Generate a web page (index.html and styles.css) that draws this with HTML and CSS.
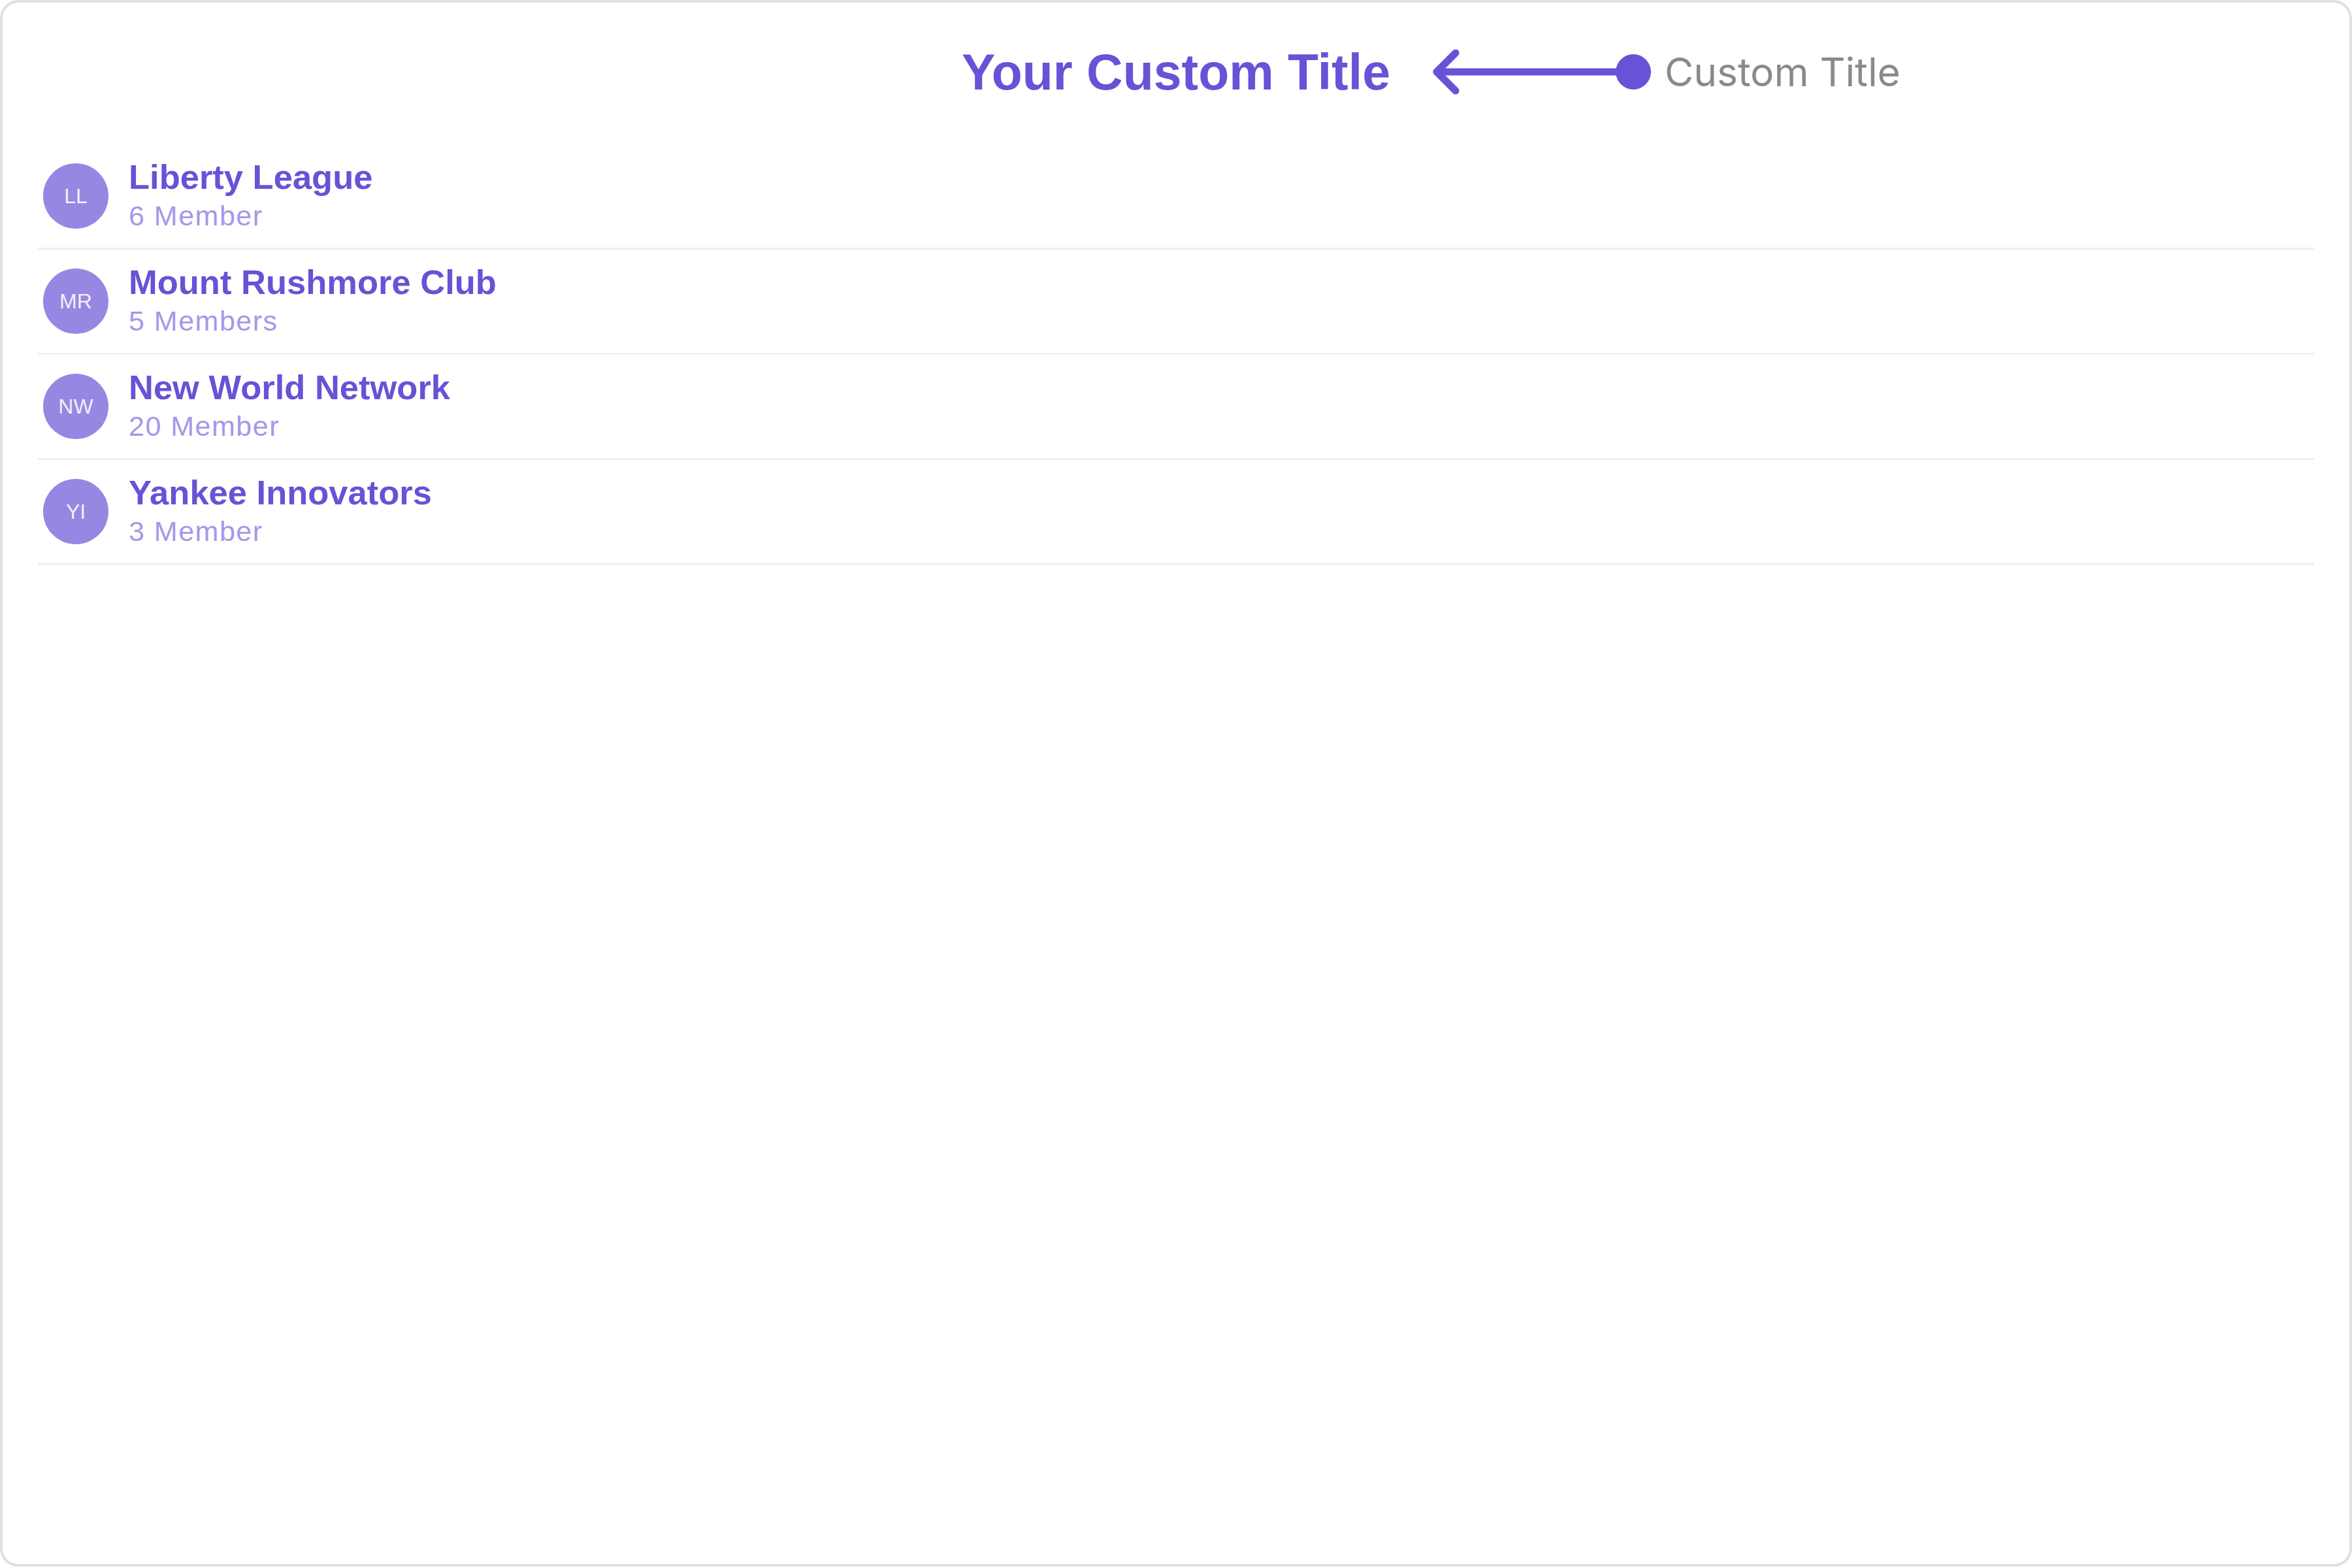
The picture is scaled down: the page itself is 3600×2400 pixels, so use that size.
FILE: index.html
```html
<!DOCTYPE html>
<html lang="en">
<head>
  <meta charset="UTF-8" />
  <meta name="viewport" content="width=device-width, initial-scale=1.0"/>
  <title>Groups</title>
  <link rel="stylesheet" href="styles.css">
</head>
<body>
  <div class="frame">
    <!-- Header with the custom title -->
    <div class="header">
      <h1 class="header-title">Your Custom Title</h1>

      <!-- annotation pointing at the title -->
      <div class="callout">
        <svg class="callout-arrow" width="350" height="80" viewBox="0 0 350 80">
          <polyline points="43,11 14,40 43,69" fill="none" stroke="#6852d6" stroke-width="11" stroke-linecap="round" stroke-linejoin="round"/>
          <line x1="14" y1="40" x2="315" y2="40" stroke="#6852d6" stroke-width="11" stroke-linecap="round"/>
          <circle cx="315" cy="40" r="27" fill="#6852d6"/>
        </svg>
        <span class="callout-label">Custom Title</span>
      </div>
    </div>

    <!-- Group list -->
    <div class="group-list">
      <div class="group-row">
        <div class="avatar">LL</div>
        <div class="group-info">
          <div class="group-name">Liberty League</div>
          <div class="group-members">6 Member</div>
        </div>
      </div>
      <div class="group-row">
        <div class="avatar">MR</div>
        <div class="group-info">
          <div class="group-name">Mount Rushmore Club</div>
          <div class="group-members">5 Members</div>
        </div>
      </div>
      <div class="group-row">
        <div class="avatar">NW</div>
        <div class="group-info">
          <div class="group-name">New World Network</div>
          <div class="group-members">20 Member</div>
        </div>
      </div>
      <div class="group-row">
        <div class="avatar">YI</div>
        <div class="group-info">
          <div class="group-name">Yankee Innovators</div>
          <div class="group-members">3 Member</div>
        </div>
      </div>
    </div>
  </div>
</body>
</html>
```

FILE: styles.css
```css
* {
  box-sizing: border-box;
}

body {
  margin: 0;
  background: #fff;
  font-family: "Liberation Sans", Arial, sans-serif;
}

.frame {
  width: 3600px;
  height: 2398px;
  border: 4px solid #e0e0e0;
  border-radius: 28px;
  background: #fff;
  overflow: hidden;
}

.header {
  position: relative;
  height: 212px;
  display: flex;
  align-items: center;
  justify-content: center;
}

.header-title {
  margin: 0;
  font-size: 77px;
  font-weight: 700;
  color: #6852d6;
  line-height: 1;
}

.callout {
  position: absolute;
  top: 0;
  left: 2181px;
  height: 100%;
  display: flex;
  align-items: center;
  gap: 13px;
}

.callout-arrow {
  display: block;
}

.callout-label {
  font-family: Inter, "Noto Sans", sans-serif;
  font-size: 60.5px;
  color: #8a8a8a;
  line-height: 1;
}

.group-list {
  padding: 5px 54px 0;
}

.group-row {
  display: flex;
  align-items: center;
  gap: 31px;
  padding: 29px 8px 29px;
  border-bottom: 3px solid #f0eefc;
}

.avatar {
  width: 100px;
  height: 100px;
  flex-shrink: 0;
  border-radius: 50%;
  background: #9787e2;
  color: rgba(255, 255, 255, 0.88);
  font-size: 32px;
  display: flex;
  align-items: center;
  justify-content: center;
}

.group-info {
  height: 100px;
  display: flex;
  flex-direction: column;
  justify-content: space-between;
}

.group-name {
  font-size: 52.5px;
  font-weight: 700;
  line-height: 42px;
  color: #6852d6;
}

.group-members {
  font-size: 43px;
  line-height: 40px;
  letter-spacing: 1.5px;
  color: #a797ea;
}
```
